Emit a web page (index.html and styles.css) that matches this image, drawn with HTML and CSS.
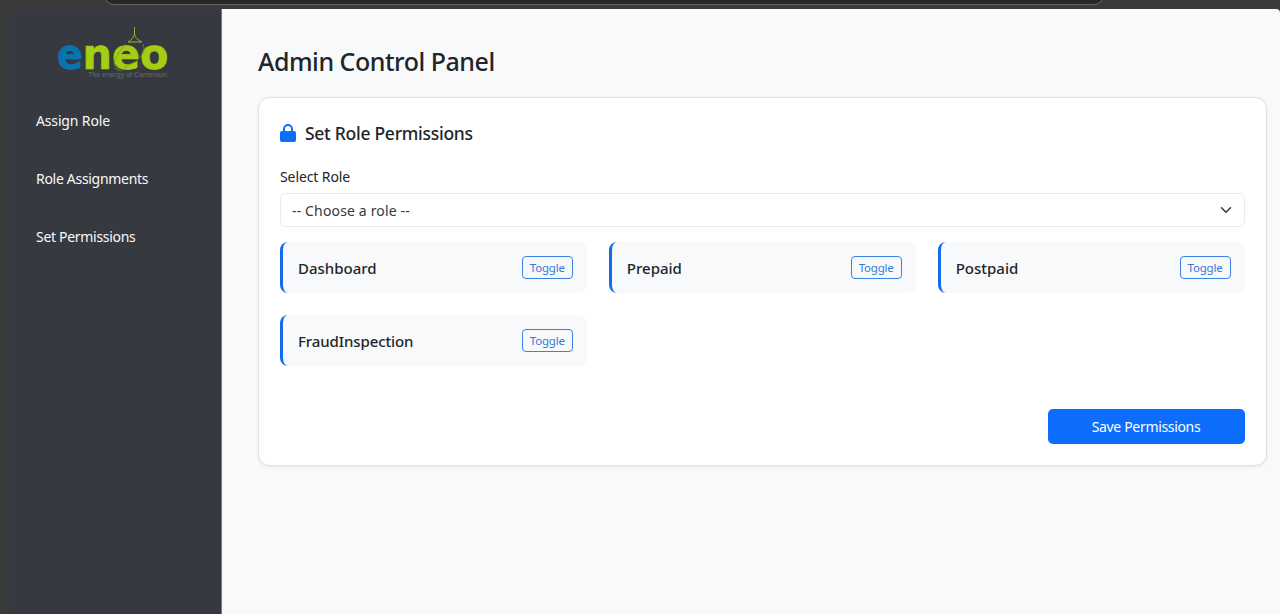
FILE: index.html
```html
<!DOCTYPE html>
<html lang="en">
<head>
<meta charset="utf-8">
<title>Admin Control Panel</title>
<link rel="stylesheet" href="styles.css">
</head>
<body>
<div class="topbar"><div class="address"></div></div>
<div class="app">
  <aside class="sidebar">
    <svg class="logo" viewBox="0 0 112 54" role="img" aria-label="eneo">
      <g class="logo-word">
        <text x="0" y="42.5" textLength="26" lengthAdjust="spacingAndGlyphs" class="blue">e</text>
        <text x="25.500" y="42.5" textLength="86" lengthAdjust="spacingAndGlyphs" class="green">neo</text>
      </g>
      <path class="bulb" d="M77.500 1V8C77 12 74 14 71 16M77.500 8C78 12 81 14 85 16M71 16H85"/>
      <path class="bulb thin" d="M69 18Q61 26 58 34Q55 42 63 43M86 18Q89 25 84 30Q80 36 70 40Q63 48 58 42"/>
      <text x="31" y="51" textLength="79" lengthAdjust="spacingAndGlyphs" class="tagline">The energy of Cameroon</text>
    </svg>
    <nav class="nav">
      <a>Assign Role</a>
      <a class="tight">Role Assignments</a>
      <a class="tight">Set Permissions</a>
    </nav>
  </aside>
  <main class="main">
    <h1>Admin Control Panel</h1>
    <section class="card">
      <h2><svg class="lock" viewBox="0 0 16 18"><path d="M4 8V5a4 4 0 0 1 8 0V8" fill="none" stroke="#0d6efd" stroke-width="2"/><rect y="7" width="16" height="11" rx="2" fill="#0d6efd"/></svg><span>Set Role Permissions</span></h2>
      <div class="label">Select Role</div>
      <div class="select"><span>-- Choose a role --</span><svg class="chevron" viewBox="0 0 16 16"><path d="m2 5 6 6 6-6"/></svg></div>
      <div class="grid">
        <div class="item"><strong>Dashboard</strong><button>Toggle</button></div>
        <div class="item"><strong>Prepaid</strong><button>Toggle</button></div>
        <div class="item"><strong>Postpaid</strong><button>Toggle</button></div>
        <div class="item"><strong class="long">FraudInspection</strong><button>Toggle</button></div>
      </div>
      <div class="actions"><button class="save">Save Permissions</button></div>
    </section>
  </main>
</div>
</body>
</html>
```
FILE: styles.css
```css
* { box-sizing: border-box; }
body {
  margin: 0;
  height: 614px;
  overflow: hidden;
  display: flex;
  flex-direction: column;
  background: #3b3b3b;
  color: #212529;
  font: 14px/22px "Noto Sans", sans-serif;
}
.topbar { height: 9px; flex: none; overflow: hidden; padding-left: 104px; }
.address {
  width: 1000px;
  height: 20px;
  margin-top: -15px;
  background: #282828;
  border: 1px solid #656565;
  border-radius: 10px;
}
.app { flex: 1; display: flex; min-height: 0; }
.sidebar {
  width: 222px;
  flex: none;
  background: linear-gradient(90deg, #3b3b3a, #363a40 12px);
  border-right: 1px solid #74787c;
  padding: 17px 0 0 36px;
}
.logo { display: block; width: 112px; height: 54px; margin-left: 21px; overflow: visible; }
.logo-word { font: bold 43px "DejaVu Sans", sans-serif; stroke-width: .6; }
.blue { fill: #0874ae; stroke: #0874ae; }
.green { fill: #a5cd13; stroke: #a5cd13; }
.bulb { fill: none; stroke: #8eb52c; stroke-width: 1; }
.thin { stroke: #6d9a24; stroke-width: .7; }
.tagline { font: 6.5px "Liberation Sans", sans-serif; fill: #646b70; }
.nav { display: flex; flex-direction: column; gap: 36px; padding-top: 30px; color: #f8f9fa; letter-spacing: -.15px; }
.tight { letter-spacing: -.3px; }
.main { flex: 1; background: #f8f9fb; border-top-right-radius: 4px; padding: 36px 13px 0 36px; }
h1 { margin: 0 0 19px; font-size: 25px; line-height: 33px; font-weight: 550; letter-spacing: -.48px; }
.card {
  height: 369px;
  padding: 23px 21.5px 0 21px;
  background: #fff;
  border: 1px solid #dfe1e4;
  border-radius: 12px;
  box-shadow: 0 1px 3px rgba(0,0,0,.07);
}
h2 { margin: 0 0 21px; display: flex; gap: 9px; font-size: 17.5px; line-height: 24px; font-weight: 550; letter-spacing: -.28px; }
.lock { width: 16px; height: 18px; margin-top: 3px; }
.label { line-height: 22px; margin-bottom: 5px; letter-spacing: -.1px; }
.select {
  height: 34px;
  padding: 2px 12px 0 11px;
  display: flex;
  align-items: center;
  justify-content: space-between;
  border: 1px solid #e9ebee;
  border-radius: 6px;
  color: #343a40;
  letter-spacing: .15px;
}
.chevron { width: 12px; height: 12px; margin-top: -2px; }
.chevron path { fill: none; stroke: #343a40; stroke-width: 2; stroke-linecap: round; stroke-linejoin: round; }
.grid { display: grid; grid-template-columns: repeat(3, 1fr); gap: 22px; margin-top: 15px; }
.item {
  height: 51px;
  padding: 0 14px 0 15px;
  display: flex;
  align-items: center;
  justify-content: space-between;
  background: #f8f9fb;
  border-left: 3px solid #146ce8;
  border-radius: 8px;
}
.item strong { font-size: 15px; font-weight: 550; }
.item .long { letter-spacing: -.1px; }
button { font: 11.5px/19px "Noto Sans", sans-serif; padding: 0; }
.item button { width: 51px; height: 23px; border: 1px solid #3a82e6; border-radius: 4px; background: transparent; color: #3479dc; letter-spacing: -.2px; }
.actions { display: flex; justify-content: flex-end; margin-top: 43px; }
.actions .save { width: 197px; height: 35px; border: 0; border-radius: 5px; background: #0d6efd; color: #fff; font-size: 14px; letter-spacing: -.33px; }
```
